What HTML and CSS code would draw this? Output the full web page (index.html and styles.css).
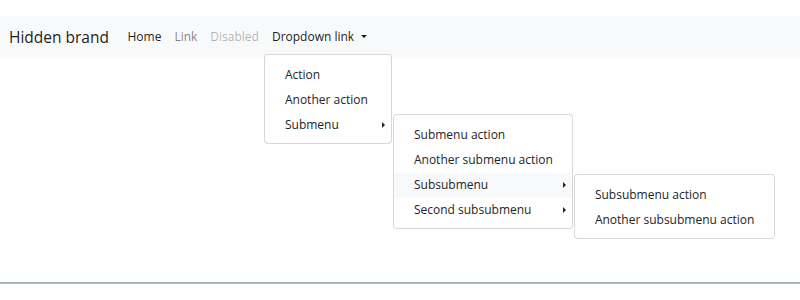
FILE: index.html
```html
<!DOCTYPE html>
<html lang="en">
<head>
  <meta charset="UTF-8">
  <meta name="viewport" content="width=device-width, initial-scale=1.0">
  <title>Multi-level dropdown</title>
  <link rel="stylesheet" href="styles.css">
</head>
<body>
  <!-- Navbar -->
  <nav class="navbar">
    <a class="brand" href="#">Hidden brand</a>
    <ul class="nav">
      <li><a class="nav-link active" href="#">Home</a></li>
      <li><a class="nav-link" href="#">Link</a></li>
      <li><a class="nav-link disabled" href="#">Disabled</a></li>
      <li class="dropdown">
        <a class="nav-link active toggle" href="#">Dropdown link</a>
        <ul class="menu menu-top">
          <li><a class="menu-item" href="#">Action</a></li>
          <li><a class="menu-item" href="#">Another action</a></li>
          <li class="submenu">
            <a class="menu-item has-sub" href="#">Submenu</a>
            <ul class="menu menu-side">
              <li><a class="menu-item" href="#">Submenu action</a></li>
              <li><a class="menu-item" href="#">Another submenu action</a></li>
              <li class="submenu">
                <a class="menu-item has-sub hover" href="#">Subsubmenu</a>
                <ul class="menu menu-side">
                  <li><a class="menu-item" href="#">Subsubmenu action</a></li>
                  <li><a class="menu-item" href="#">Another subsubmenu action</a></li>
                </ul>
              </li>
              <li class="submenu">
                <a class="menu-item has-sub" href="#">Second subsubmenu</a>
              </li>
            </ul>
          </li>
        </ul>
      </li>
    </ul>
  </nav>

  <div class="rule"></div>
</body>
</html>
```

FILE: styles.css
```css
/* General Styling */
* {
  box-sizing: border-box;
}

body {
  margin: 0;
  height: 300px;
  padding: 16px 0;
  display: flex;
  flex-direction: column;
  font-family: 'Open Sans', sans-serif;
  font-size: 12px;
  line-height: 19.5px;
  color: #212529;
  background: #fff;
}

/* Navbar */
.navbar {
  display: flex;
  align-items: center;
  height: 42px;
  padding: 0 9px;
  background: #f8f9fa;
}

.brand {
  margin-right: 12px;
  font-size: 15.5px;
  line-height: 24px;
  color: rgba(0, 0, 0, 0.9);
  text-decoration: none;
}

.nav {
  display: flex;
  list-style: none;
  margin: 0;
  padding: 0;
}

.nav-link {
  display: block;
  padding: 6.5px;
  color: rgba(0, 0, 0, 0.5);
  text-decoration: none;
}

.nav-link.active {
  color: rgba(0, 0, 0, 0.9);
}

.nav-link.disabled {
  color: rgba(0, 0, 0, 0.3);
}

.toggle::after {
  content: "";
  display: inline-block;
  margin-left: 7px;
  vertical-align: 3px;
  border-top: 3px solid;
  border-left: 3px solid transparent;
  border-right: 3px solid transparent;
}

/* Dropdown menus */
.dropdown,
.submenu {
  position: relative;
}

.menu {
  position: absolute;
  z-index: 10;
  min-width: 128px;
  margin: 0;
  padding: 8px 0 5px;
  list-style: none;
  background: #fff;
  border: 1px solid rgba(0, 0, 0, 0.15);
  border-radius: 4px;
}

.menu-top {
  top: 100%;
  left: -1px;
  margin-top: 1px;
}

.menu-side {
  top: 1px;
  left: 100%;
  margin-left: 2px;
}

.menu-item {
  display: block;
  position: relative;
  padding: 2px 19.5px 4px;
  line-height: 19px;
  white-space: nowrap;
  color: #212529;
  text-decoration: none;
}

.menu-item.hover {
  background: #f8f9fa;
}

.has-sub::after {
  content: "";
  position: absolute;
  right: 6px;
  top: 50%;
  margin-top: -4px;
  border-left: 3px solid;
  border-top: 3px solid transparent;
  border-bottom: 3px solid transparent;
}

/* Bottom rule */
.rule {
  margin-top: auto;
  height: 2px;
  background: #a9b8c0;
}
```
